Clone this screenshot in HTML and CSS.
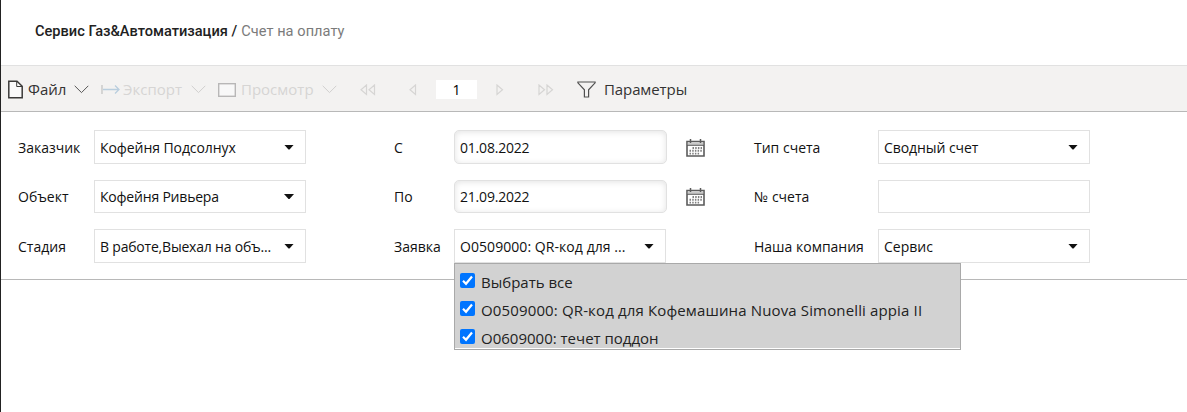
FILE: index.html
```html
<!DOCTYPE html>
<html lang="ru">
<head>
<meta charset="utf-8">
<title>Счет на оплату</title>
<link rel="stylesheet" href="styles.css">
</head>
<body>
<div class="page">
  <header class="header"><span class="crumb-root">Сервис Газ&amp;Автоматизация /</span><span class="crumb-page">Счет на оплату</span></header>
  <nav class="toolbar">
    <svg class="icon file-icon" width="15" height="19" viewBox="0 0 15 19"><path d="M.8 1.2H9L14.2 6.2V17.8H.8Z" fill="#fafafa" stroke="#3b3a39" stroke-width="1.5"/><path d="M8.7 1.2V6.5H14" fill="none" stroke="#3b3a39"/></svg>
    <span class="tool t-file">Файл</span>
    <svg class="icon chev c1" width="15" height="9" viewBox="0 0 15 9"><path d="M.7.8 7.5 7.6 14.3.8" fill="none" stroke="#555"/></svg>
    <svg class="icon export-icon off" width="19" height="11" viewBox="0 0 19 11"><path d="M1 1V10" stroke="#c4c4c4" stroke-width="1.3"/><path d="M2 5.5H18M14 1.5 18 5.5 14 9.5" fill="none" stroke="#b9cede" stroke-width="1.3"/></svg>
    <span class="tool t-export off">Экспорт</span>
    <svg class="icon chev c2" width="15" height="9" viewBox="0 0 15 9"><path d="M.7.8 7.5 7.6 14.3.8" fill="none" stroke="#d0cfce"/></svg>
    <svg class="icon view-icon" width="18" height="14" viewBox="0 0 18 14"><rect x=".7" y=".7" width="16.6" height="12.6" fill="#f8f8f8" stroke="#b8b7b7" stroke-width="1.4"/></svg>
    <span class="tool t-view off">Просмотр</span>
    <svg class="icon chev c3" width="15" height="9" viewBox="0 0 15 9"><path d="M.7.8 7.5 7.6 14.3.8" fill="none" stroke="#d0cfce"/></svg>
    <svg class="icon first" width="16" height="12" viewBox="0 0 16 12"><path d="M6.5 1V10.5L1 5.8ZM14.5 1V10.5L9 5.8Z" fill="none" stroke="#d6d5d4" stroke-width="1.2"/></svg>
    <svg class="icon prev" width="8" height="12" viewBox="0 0 8 12"><path d="M6.5 1V10.5L1 5.8Z" fill="none" stroke="#d6d5d4" stroke-width="1.2"/></svg>
    <span class="page-number">1</span>
    <svg class="icon next" width="8" height="12" viewBox="0 0 8 12"><path d="M1 1V10.5L6.5 5.8Z" fill="none" stroke="#d6d5d4" stroke-width="1.2"/></svg>
    <svg class="icon last" width="16" height="12" viewBox="0 0 16 12"><path d="M1 1V10.5L6.5 5.8ZM9 1V10.5L14.5 5.8Z" fill="none" stroke="#d6d5d4" stroke-width="1.2"/></svg>
    <svg class="icon filter" width="19" height="17" viewBox="0 0 19 17"><path d="M.9 1H18.1V1.8L11.6 8.8V16H7.4V8.8L.9 1.8Z" fill="none" stroke="#505050" stroke-width="1.2"/></svg>
    <span class="tool t-params">Параметры</span>
  </nav>
  <main class="form">
    <div class="column col-a">
      <label>Заказчик</label><div class="field select"><span class="v1">Кофейня Подсолнух</span><i class="arrow"></i></div>
      <label>Объект</label><div class="field select"><span class="v2">Кофейня Ривьера</span><i class="arrow"></i></div>
      <label>Стадия</label><div class="field select"><span class="v3">В работе,Выехал на объ...</span><i class="arrow"></i></div>
    </div>
    <div class="column col-b">
      <label>С</label><div class="field date"><span>01.08.2022</span></div>
      <svg class="calendar" width="19" height="18" viewBox="0 0 19 18"><path d="M1 2.5H18V17H1Z" fill="#fff" stroke="#5b5b5b" stroke-width="1.6"/><path d="M1.8 3.3H17.2V6H1.8Z" fill="#c9c9c9"/><path d="M1 6.3H18" stroke="#5b5b5b"/><path d="M4.5 0V4M14.5 0V4" stroke="#5b5b5b" stroke-width="1.5"/><path d="M6.5 9H16M3.5 11.8H16M3.5 14.6H14" stroke="#808080" stroke-width="1.9" stroke-dasharray="1.5 1.2"/></svg>
      <label>По</label><div class="field date"><span>21.09.2022</span></div>
      <svg class="calendar" width="19" height="18" viewBox="0 0 19 18"><path d="M1 2.5H18V17H1Z" fill="#fff" stroke="#5b5b5b" stroke-width="1.6"/><path d="M1.8 3.3H17.2V6H1.8Z" fill="#c9c9c9"/><path d="M1 6.3H18" stroke="#5b5b5b"/><path d="M4.5 0V4M14.5 0V4" stroke="#5b5b5b" stroke-width="1.5"/><path d="M6.5 9H16M3.5 11.8H16M3.5 14.6H14" stroke="#808080" stroke-width="1.9" stroke-dasharray="1.5 1.2"/></svg>
      <label>Заявка</label>
      <div class="field select"><span class="v4">О0509000: QR-код для ...</span><i class="arrow"></i>
        <div class="menu">
          <div class="option"><svg class="check" viewBox="0 0 15 15"><rect width="15" height="15" rx="2" fill="#0075ff"/><path d="M3 7.8 6 10.8 12 3.5" fill="none" stroke="#fff" stroke-width="2.2"/></svg><span>Выбрать все</span></div>
          <div class="option"><svg class="check" viewBox="0 0 15 15"><rect width="15" height="15" rx="2" fill="#0075ff"/><path d="M3 7.8 6 10.8 12 3.5" fill="none" stroke="#fff" stroke-width="2.2"/></svg><span class="o2">О0509000: QR-код для Кофемашина Nuova Simonelli appia II</span></div>
          <div class="option"><svg class="check" viewBox="0 0 15 15"><rect width="15" height="15" rx="2" fill="#0075ff"/><path d="M3 7.8 6 10.8 12 3.5" fill="none" stroke="#fff" stroke-width="2.2"/></svg><span>О0609000: течет поддон</span></div>
        </div>
      </div>
    </div>
    <div class="column col-c">
      <label>Тип счета</label><div class="field select"><span class="v5">Сводный счет</span><i class="arrow"></i></div>
      <label>№ счета</label><div class="field"></div>
      <label>Наша компания</label><div class="field select"><span>Сервис</span><i class="arrow"></i></div>
    </div>
  </main>
</div>
</body>
</html>
```
FILE: styles.css
```css
* { box-sizing: border-box; }
body { margin: 0; background: #fff; font-family: "Open Sans", "Noto Sans", sans-serif; color: #111; }
.page { height: 412px; border-left: 1px solid #222; overflow: hidden; }
.header { height: 65px; padding: 20px 0 0 34px; font: 500 14.6px/22px Roboto, sans-serif; display: flex; gap: 4px; }
.crumb-root { color: #212121; }
.crumb-page { color: #7b7b7b; font-weight: 450; letter-spacing: .05px; }
.toolbar { height: 47px; background: #f3f2f1; border-top: 1px solid #e1e1e1; border-bottom: 1px solid #b8b8b8; display: flex; align-items: center; padding: 2px 0 0 7px; font-size: 15px; color: #333; white-space: nowrap; }
.icon { flex: none; display: block; }
.tool { flex: none; line-height: 20px; margin-bottom: 2px; }
.off { color: #d6d5d4; }
.t-file { width: 40px; margin-left: 5px; }
.c1 { margin-left: 6px; }
.export-icon { margin-left: 12px; }
.t-export { width: 62px; margin-left: 3px; }
.c2 { margin-left: 6px; }
.view-icon { margin-left: 12px; }
.t-view { width: 76px; margin-left: 5px; }
.c3 { margin-left: 5px; }
.first { margin-left: 23px; }
.prev { margin-left: 33px; }
.page-number { width: 41px; height: 19px; margin-left: 19px; background: #fff; text-align: center; line-height: 20px; font-size: 14px; color: #000; }
.next { margin-left: 19px; }
.last { margin-left: 34px; }
.filter { margin-left: 23px; }
.t-params { margin-left: 8px; letter-spacing: -.1px; }
.form { height: 168px; border-bottom: 1px solid #b8b8b8; padding: 18px 0 0 17px; display: flex; }
.column { display: grid; grid-template-rows: 34px 33px 34px; row-gap: 16px; align-content: start; align-items: center; font-size: 14px; }
.col-a { grid-template-columns: 76px 212px; width: 376px; }
.col-b { grid-template-columns: 60px 213px 20px; width: 360px; }
.col-b label { grid-column: 1; }
.col-c { grid-template-columns: 124px 212px; }
label { white-space: nowrap; }
.field { position: relative; height: 100%; border: 1px solid #e1e1e1; background: #fff; display: flex; align-items: center; padding: 0 11px 0 5px; white-space: nowrap; }
.field.select { justify-content: space-between; width: 212px; }
.field.date { border-radius: 5px; box-shadow: inset 0 1px 6px #e2e2e2; letter-spacing: -.2px; }
.v1, .v5 { letter-spacing: -.07px; }
.v2 { letter-spacing: -.2px; }
.v3 { letter-spacing: -.2px; }
.v4 { letter-spacing: .06px; }
.arrow { width: 10px; height: 5px; background: #111; clip-path: polygon(0 0, 100% 0, 55% 100%, 45% 100%); flex: none; }
.calendar { margin: 1px 0 0 19px; }
.menu { position: absolute; left: -1px; top: 33px; width: 507px; height: 87px; border: 1px solid #a9a9a9; background: #d2d2d2; box-shadow: inset 0 -1px #fff; padding-top: 4px; z-index: 2; font-size: 15px; letter-spacing: 0; color: #222; }
.option { height: 28px; display: flex; align-items: center; padding-left: 5px; gap: 6px; }
.o2 { letter-spacing: .14px; }
.check { width: 15px; height: 15px; flex: none; margin-top: -3px; }
```
